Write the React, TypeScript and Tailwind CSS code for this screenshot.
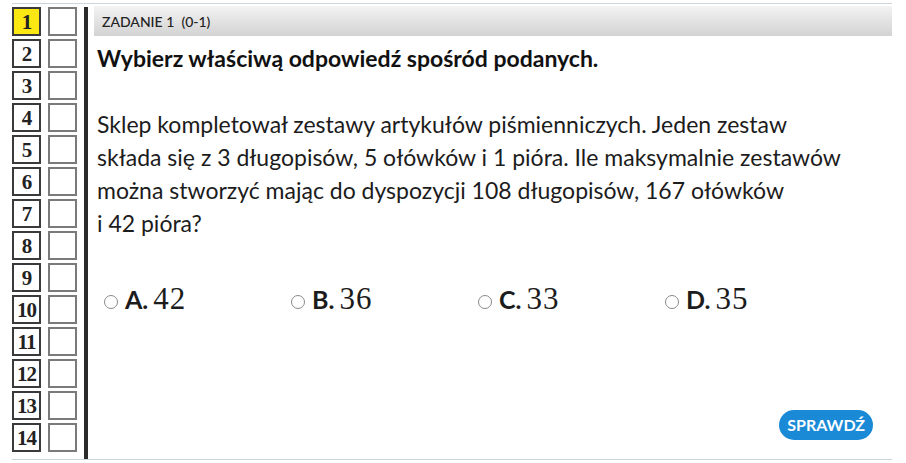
import React from 'react';

const QUESTIONS = Array.from({ length: 14 }, (_, i) => i + 1);

const ANSWERS = [
    { letter: 'A.', value: '42' },
    { letter: 'B.', value: '36' },
    { letter: 'C.', value: '33' },
    { letter: 'D.', value: '35' },
];

const App: React.FC = () => {
    return (
        <div className="w-[906px] h-[463px] bg-white pt-[3px] pl-[12px] font-['Lato','Noto_Sans',sans-serif] text-[#1c1c1c] overflow-hidden">
            <div className="w-[880px] h-[457px] border-t border-b border-[#cbd5da] flex">
                {/* Question navigator */}
                <div className="grid grid-cols-[29px_29px] gap-x-[7px] gap-y-[3px] pt-[3px] content-start">
                    {QUESTIONS.map((n) => (
                        <React.Fragment key={n}>
                            <div
                                className={`h-[29px] border-2 border-[#3a3a3a] flex justify-center pt-[1px] font-['Liberation_Serif',serif] font-bold text-[21px] leading-[25px] text-[#222] overflow-hidden tracking-[-1px] ${n === 1 ? 'bg-[#fbe812]' : 'bg-white'}`}
                            >
                                {n}
                            </div>
                            <div className="h-[29px] border-2 border-[#7a7a7a] bg-white" />
                        </React.Fragment>
                    ))}
                </div>

                {/* Divider */}
                <div className="w-[4px] bg-[#2b2b2b] ml-[7px] mt-[3px]" />

                {/* Task content */}
                <div className="flex-1 ml-[6px] pt-[2px] flex flex-col">
                    <div className="h-[30px] bg-gradient-to-b from-[#f3f3f3] to-[#d3d3d3] flex items-center pl-[8px] text-[14px] font-medium text-[#222] whitespace-pre">
                        ZADANIE 1  (0-1)
                    </div>

                    <h1 className="mt-[8px] ml-[3px] text-[23px] leading-[28px] font-bold text-[#111]">
                        Wybierz właściwą odpowiedź spośród podanych.
                    </h1>

                    <p className="mt-[36px] ml-[3px] w-[780px] text-[23px] leading-[33px] text-[#1c1c1c]">
                        Sklep kompletował zestawy artykułów piśmienniczych. Jeden zestaw
                        <br />
                        składa się z 3 długopisów, 5 ołówków i 1 pióra. Ile maksymalnie zestawów
                        <br />
                        można stworzyć mając do dyspozycji 108 długopisów, 167 ołówków
                        <br />
                        i 42 pióra?
                    </p>

                    <div className="mt-[36px] pl-[10px] flex">
                        {ANSWERS.map((a) => (
                            <label key={a.letter} className="w-[187px] flex items-center">
                                <span className="w-[14px] h-[14px] rounded-full border border-[#8a8a8a] bg-white mt-[6px]" />
                                <span className="flex items-baseline">
                                    <span className="ml-[7px] text-[25px] font-bold text-[#1c1c1c]">{a.letter}</span>
                                    <span className="ml-[5px] font-['Liberation_Serif',serif] text-[31px] tracking-[1px] text-[#1c1c1c]">{a.value}</span>
                                </span>
                            </label>
                        ))}
                    </div>

                    <div className="mt-auto mb-[19px] mr-[19px] self-end">
                        <button className="h-[30px] px-[8px] rounded-full bg-[#1b8ad6] text-white text-[16px] font-bold">
                            SPRAWDŹ
                        </button>
                    </div>
                </div>
            </div>
        </div>
    );
};

export default App;
